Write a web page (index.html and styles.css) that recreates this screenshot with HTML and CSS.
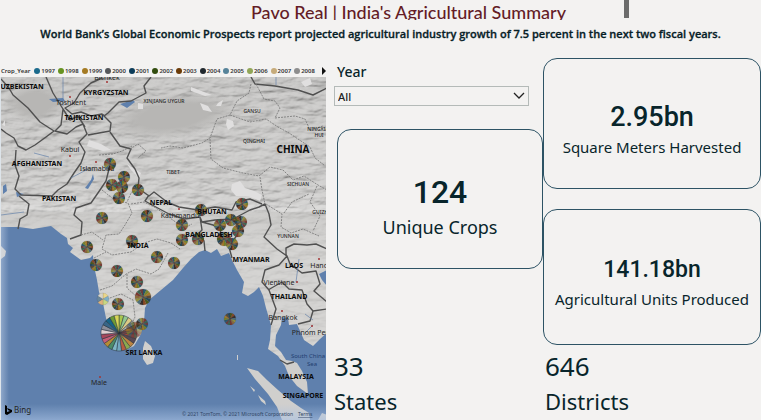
FILE: index.html
```html
<!DOCTYPE html>
<html lang="en">
<head>
<meta charset="utf-8">
<title>Pavo Real | India's Agricultural Summary</title>
<link rel="stylesheet" href="styles.css">
</head>
<body>
<header class="top">
  <h1 class="title">Pavo Real | India's Agricultural Summary</h1>
  <span class="marker"></span>
  <p class="lead">World Bank’s Global Economic Prospects report projected agricultural industry growth of 7.5 percent in the next two fiscal years.</p>
</header>
<main class="board">
  <section class="map-panel">
    <div class="legend">
      <span>Crop_Year</span>
      <ul class="years">
        <li class="c1">1997</li><li class="c2">1998</li><li class="c3">1999</li><li class="c4">2000</li><li class="c5">2001</li><li class="c6">2002</li><li class="c7">2003</li><li class="c8">2004</li><li class="c9">2005</li><li class="c10">2006</li><li class="c11">2007</li><li class="c12">2008</li>
      </ul>
      <button class="next" aria-label="More years"></button>
    </div>
    <svg class="map" viewBox="0 77 326 343" preserveAspectRatio="xMinYMin slice" role="img" aria-label="Map of crops by year">
      <defs>
        <filter id="relief" x="0" y="0" width="100%" height="100%">
          <feTurbulence type="fractalNoise" baseFrequency="0.045 0.13" numOctaves="4" seed="7" result="n"/>
          <feDiffuseLighting in="n" surfaceScale="4" diffuseConstant="1" lighting-color="#ffffff"><feDistantLight azimuth="235" elevation="52"/></feDiffuseLighting>
          <feColorMatrix type="saturate" values="0"/>
        </filter>
        <linearGradient id="edge-left"><stop offset="0" stop-color="#d5e2f4" stop-opacity=".4"/><stop offset="1" stop-color="#d5e2f4" stop-opacity="0"/></linearGradient>
        <linearGradient id="edge-bottom" x2="0" y2="1"><stop offset="0" stop-color="#a9c2e4" stop-opacity="0"/><stop offset="1" stop-color="#a9c2e4" stop-opacity=".6"/></linearGradient>
        <radialGradient id="plain"><stop offset=".5" stop-color="#b7b6b4"/><stop offset="1" stop-color="#b7b6b4" stop-opacity="0"/></radialGradient>
        <linearGradient id="shade" x2="0" y2="1"><stop offset="0" stop-color="#b6b5b3"/><stop offset=".3" stop-color="#bebdbb"/><stop offset=".5" stop-color="#cfcecc"/><stop offset="1" stop-color="#cfcecc"/></linearGradient>
      </defs>
      <rect y="77" width="326" height="343" fill="url(#shade)"/>
      <rect y="77" width="326" height="135" filter="url(#relief)" opacity=".34"/>
      <rect y="205" width="326" height="150" filter="url(#relief)" opacity=".15"/>
      <ellipse cx="172" cy="116" rx="68" ry="23" fill="url(#plain)" transform="rotate(-8 172 116)"/>
      <ellipse cx="34" cy="103" rx="32" ry="20" fill="url(#plain)"/>
      <g class="snow">
        <path d="M190 87l13 5 8 3-7 1-14-5zM199 103l8 3 4 6-9-2zM217 103l5-3-2 6-5 0zM226 119l6 2 1 5-6 4-2-6zM300 82l9-4 2 6-7 3zM231 184l8-3 5 7 9 3 8 4-2 6-12-5-12 0-5-6zM137 103l5 1 0 5-5 0zM88 140l12 4 10 6-8 1-16-5zM126 164l14 9-2 5-8-8zM1 125l3-5 0 6z"/>
      </g>
      <path class="water" d="M0 227L18 227 32 229 50 226 60 234 66 238 67 244 72 248 69 252 80 260 89 258 92 255 93 266 96 280 98 292 102 303 105 318 110 332 118 345 125 350 133 346 140 334 143 322 144 308 148 300 160 290 172 280 182 268 190 259 198 252 204 250 210 253 216 249 220 256 228 253 232 262 236 270 243 282 241 293 247 296 253 292 258 287 262 296 265 308 270 325 269 340 267 349 277 356 284 366 288 376 296 386 307 394 306 382 301 371 296 363 291 361 285 360 280 352 274 346 275 335 280 325 281 317 287 318 288 325 296 324 303 340 312 346 319 339 326 333V420H0ZM326 270L318 274 321 280 326 286ZM119 104l13 -4 2 2-8 6zM48 99l14-1 2 3-12 1zM2 186l3-2 1 7-4 3zM15 192l8 2-7 3zM84 188l6-8 2-6 1 5-6 10z"/>
      <path class="land" d="M246 368L257 371 266 380 277 390 290 401 300 408 308 413 309 420H281L276 407 267 394 254 379ZM144 341L150 346 154 356 152 363 146 365 142 359 142 348ZM0 246L5 251 4 256 0 259ZM257 395l7 6 1 4-5-4zM249 386l5 4-1 2zM326 415l-5-2-4 7h9zM236 355h1v5h-1z"/>
      <g class="border">
        <path d="M0 79L8 88 12 95 27 108 39 122 53 131 45 137 34 145 25 150 17 146 13 138 5 133 0 129M45 77L52 93 62 109 60 125 54 131 66 134 75 127 82 124 86 134 78 142 84 152 80 163 73 173 66 184 57 190 51 196 20 195 14 189 18 176 14 165 15 150M18 196L28 204 26 215 19 219 17 229M150 77L143 86 145 93 130 101 118 102 107 113 103 116 110 123 109 131 98 133 87 135M79 93L90 83 101 78M79 93L73 103 64 108 71 114 80 112 90 116 101 114 104 116M62 109L69 120 77 116 84 127"/>
        <path d="M109 132L119 146 130 149 126 158 134 169 138 178 137 188 148 196 153 192 166 202 178 207 197 210 214 207 231 210 235 202 249 199 261 204M108 169L105 181 99 190 90 203 75 208 73 215 81 222 80 235 69 239M148 195L144 201 153 206 168 214 183 219 199 217 201 222 214 220 232 219 249 210 258 207 264 204 268 214 270 225 263 237 276 249 286 256 278 265 264 270 261 282 268 290 275 309 270 325M199 217L201 230 197 234 203 241 204 251M201 222L212 225 220 229 218 239 228 247 231 258M232 219L240 229 234 238 228 247M250 77L254 84 274 86 297 90 312 95 326 88M285 256L285 248 293 244 306 245 315 244 326 249M286 256L289 264 301 273 315 271 319 284 313 291 326 302M267 290L281 282 288 289 301 290 306 304 312 311 309 321 297 324M312 311L326 309M279 360l7 4 7-2"/>
      </g>
      <g class="dotted">
        <path d="M129 149L137 144 145 151 137 158M98 155L112 154 121 151 131 146M250 84L248 93 236 101 229 115 216 119 209 138 201 143 182 148 169 146 160 148M229 115L249 122 265 119 277 127 288 133 297 139 309 147 314 158 323 165M209 139L210 159 222 168 242 173 258 176 269 167 282 170 292 180 303 176 317 185 326 190M255 84L263 99 274 101 279 108 274 118 294 116 304 119 309 130 322 126M265 204L281 214 280 227 290 233 302 229 318 236M101 190L115 201 127 203 131 213 124 225 118 234 105 235 101 249 111 255 130 252 143 243 156 239 170 243 179 249M130 204L143 202 155 208 169 218 183 228 191 224M80 235L91 232 102 240M93 258L105 252M99 290L111 286 125 274 135 269 150 274 158 269 167 253M106 299L120 294 132 300 134 317 128 330M126 274L126 288 136 297M137 188L130 193 126 202M283 213L291 202 308 194M259 177L261 190 264 204M316 186L309 202 319 216 312 231"/>
      </g>
      <g class="fine"><path d="M62 77v29M275 77v8M0 215l23-3M48 157l-15-4M70 178l17-9M298 259l-3 23M304 314l8 6M304 333l8-8"/></g>
      <g class="city"><circle cx="106" cy="82" r="1"/><circle cx="69" cy="97" r="1"/><circle cx="69" cy="156" r="1"/><circle cx="95" cy="162" r="1"/><circle cx="178" cy="209" r="1"/><circle cx="318" cy="259" r="1"/><circle cx="296" cy="282" r="1"/><circle cx="281" cy="311" r="1"/><circle cx="311" cy="326" r="1"/><circle cx="99" cy="377" r="1"/></g>
      <g class="towns">
        <text x="106" y="80">Bishkek</text><text x="70" y="105">Toshkent</text><text x="69" y="152">Kabul</text><text x="96" y="171">Islamabad</text><text x="179" y="218">Kathmandu</text><text x="319" y="268">Hanoi</text><text x="278" y="285">Vientiane</text><text x="282" y="320">Bangkok</text><text x="312" y="335">Phnom Penh</text><text x="98" y="385">Male</text>
      </g>
      <g class="provinces"><text x="163" y="103">XINJIANG UYGUR</text><text x="251" y="113">GANSU</text><text x="253" y="143">QINGHAI</text><text x="317" y="131">NINGXIA</text><text x="318" y="137">HUI</text><text x="172" y="174">TIBET</text><text x="297" y="186">SICHUAN</text><text x="323" y="214">GUIZHOU</text><text x="287" y="238">YUNNAN</text></g>
      <g class="sea-name"><text x="307" y="358">South China</text><text x="311" y="366">Sea</text></g>
      <g id="pies"></g>
      <g class="countries">
        <text x="21" y="89">UZBEKISTAN</text><text x="105" y="95">KYRGYZSTAN</text><text x="83" y="120">TAJIKISTAN</text><text x="36" y="166">AFGHANISTAN</text><text x="58" y="201">PAKISTAN</text><text x="160" y="205">NEPAL</text><text x="211" y="214">BHUTAN</text><text x="208" y="237">BANGLADESH</text><text x="137" y="248">INDIA</text><text x="250" y="262">MYANMAR</text><text x="293" y="268">LAOS</text><text x="288" y="299">THAILAND</text><text x="143" y="355">SRI LANKA</text><text x="295" y="379">MALAYSIA</text><text x="302" y="398">SINGAPORE</text>
        <text class="big" x="292" y="153">CHINA</text>
      </g>
      <rect y="227" width="8" height="193" fill="url(#edge-left)"/>
      <rect y="404" width="326" height="16" fill="url(#edge-bottom)"/>
      <path d="M4 405l2 1v6l3-1-2-1-1-2 5 2v2l-5 3-2-1z"/>
      <text class="bing" x="13" y="413">Bing</text>
      <text class="credit" x="181" y="416">© 2021 TomTom, © 2021 Microsoft Corporation</text>
      <text class="credit terms" x="297" y="416">Terms</text>
    </svg>
  </section>
  <section class="middle">
    <div class="filter">
      <label for="year">Year</label>
      <div class="picker">
        <select id="year"><option>All</option></select>
        <svg class="chevron" viewBox="0 0 12 7"><path d="M1 1l5 5 5-5"/></svg>
      </div>
    </div>
    <article class="card crops"><strong>124</strong><span>Unique Crops</span></article>
    <div class="stat"><strong>33</strong><span>States</span></div>
  </section>
  <section class="right">
    <article class="card harvested"><strong>2.95bn</strong><span>Square Meters Harvested</span></article>
    <article class="card produced"><strong>141.18bn</strong><span>Agricultural Units Produced</span></article>
    <div class="stat"><strong>646</strong><span>Districts</span></div>
  </section>
</main>
<script src="script.js"></script>
</body>
</html>
```
FILE: styles.css
```css
* { box-sizing: border-box; }
body {
  margin: 0;
  min-height: 100vh;
  display: flex;
  flex-direction: column;
  background: #f3f2f1;
  color: #08252b;
  font-family: "Noto Sans", "Open Sans", sans-serif;
}
.top { position: relative; height: 58px; text-align: center; }
.title {
  margin: 0;
  height: 20px;
  padding-left: 56px;
  overflow: hidden;
  color: #641c26;
  font: 500 18px/24px Lato, sans-serif;
}
.marker { position: absolute; left: 82%; top: 0; width: 5px; height: 18px; background: #6c6c6c; }
.lead { margin: 4px 0 0; font-size: 11px; line-height: 20px; font-weight: 600; white-space: nowrap; font-family: "Open Sans", sans-serif; -webkit-text-stroke: 0.3px; color: #062026; }
.board { flex: 1; display: grid; grid-template-columns: 326fr 217fr 218fr; }
.map-panel { display: flex; flex-direction: column; padding-top: 6px; min-width: 0; }
.legend { display: flex; align-items: center; height: 13px; padding-left: 1px; font-size: 6px; font-weight: 600; color: #333; }
.years { display: flex; flex: 1; justify-content: space-between; margin: 0; padding: 0 7px 0 4px; list-style: none; }
.years li { display: flex; align-items: center; gap: 1px; }
.years li::before { content: ""; width: 6px; height: 6px; border-radius: 50%; background: #1b6a8c; }
.years .c2::before { background: #679321; }
.years .c3::before { background: #a47a22; }
.years .c4::before { background: #55575a; }
.years .c5::before { background: #0c3c59; }
.years .c6::before { background: #314c0e; }
.years .c7::before { background: #6b3b08; }
.years .c8::before { background: #20282e; }
.years .c9::before { background: #568399; }
.years .c10::before { background: #91a657; }
.years .c11::before { background: #c6ab7a; }
.years .c12::before { background: #8d8d8d; }
.next { width: 4px; height: 8px; padding: 0; border: solid transparent; border-width: 4px 0 4px 4px; border-left-color: #111; background: none; }
.map { display: block; width: 100%; flex: 1; min-height: 0; border-left: 1px solid #dde4ea; }
.map text { fill: #252525; font-family: "Noto Sans", sans-serif; }
.water { fill: #5f80ad; }
.land { fill: #d0cfcd; }
.snow { fill: #e0dfdf; }
.border { fill: none; stroke: #505050; stroke-width: 1.4; stroke-linejoin: round; }
.dotted { fill: none; stroke: #747474; stroke-width: .8; stroke-dasharray: 2 1; }
.fine { fill: none; stroke: #6683aa; stroke-width: .7; }
.city { fill: #a33434; }
.towns { font-size: 7px; text-anchor: middle; }
.provinces { font-size: 5px; font-weight: 500; text-anchor: middle; }
.map .sea-name text { font-size: 6px; text-anchor: middle; fill: #233f70; }
.countries { font-size: 7px; font-weight: 700; text-anchor: middle; }
.map .countries text { fill: #0a0a0a; }
.countries .big { font-size: 10px; }
.map .bing { font-size: 8px; }
.map .credit { font-size: 5px; fill: #304564; }
.terms { text-decoration: underline; }
.middle, .right { display: flex; flex-direction: column; min-width: 0; }
.middle { padding-left: 8px; }
.filter { padding: 4px 14px 0 0; }
.filter label { display: block; padding-left: 3px; font-size: 14px; line-height: 20px; font-weight: 500; }
.picker { position: relative; margin-top: 4px; }
.picker select { display: block; width: 100%; height: 20px; padding: 0 3px; border: 1px solid #b4bab8; border-radius: 0; appearance: none; background: none; color: #222; font: 500 11px "Noto Sans", sans-serif; }
.chevron { position: absolute; right: 4px; top: 6px; width: 12px; height: 7px; fill: none; stroke: #222; stroke-width: 1.3; pointer-events: none; }
.card { display: flex; flex-direction: column; align-items: center; border: 1px solid #2d5365; border-radius: 14px; white-space: nowrap; }
.card strong { font-family: Roboto, sans-serif; font-weight: 500; }
.crops { margin: 23px 0 0 3px; height: 140px; padding-top: 42px; }
.crops strong { font-size: 32px; line-height: 40px; }
.crops span { font-size: 18px; line-height: 30px; }
.harvested { height: 131px; padding-top: 42px; }
.produced { height: 136px; margin-top: 20px; padding-top: 45px; }
.harvested strong { font-size: 27px; line-height: 32px; }
.produced strong { font-size: 23px; line-height: 30px; }
.harvested span, .produced span { font-size: 15px; line-height: 28px; }
.stat { display: flex; flex-direction: column; margin-top: auto; padding: 0 0 2px 2px; }
.middle .stat { padding-left: 0; }
.stat strong { font-size: 26px; font-weight: 400; line-height: 36px; }
.stat span { font-size: 22px; line-height: 34px; }
```
FILE: script.js
```js
const NS = 'http://www.w3.org/2000/svg';
const dark = ['#2d5a6b', '#78862a', '#a67a28', '#5d4b35', '#264856', '#4c5a1c', '#8a4a22', '#3b2f2a', '#4f7078', '#93913f', '#8f6a3a', '#7d3a30', '#3f6650', '#6b3e3c'];
const bright = ['#a9c64f', '#93c990', '#dccb86', '#b3b4b2', '#8f573c', '#80414b', '#a0463f', '#594853', '#bd843f', '#8ba94f', '#b55e42', '#72a8c0', '#7fb6c4', '#4d8c68', '#b68b34', '#c45e78', '#a7475d', '#dfcfd1', '#8c8e99', '#376587', '#15658a', '#6d9b36', '#d8d557'];
const light = ['#ead68a', '#7eafc5', '#c8d682', '#ddb27c', '#68869b', '#d9d5c6'];
const points = [
  [109,164,6],[123,177,6],[111,185,6],[121,187,6],[137,190,6],[118,198,6],[101,218,6],[146,216,6],[131,241,6],
  [86,247,6],[95,265,6],[116,271,6],[156,257,6],[136,282,6],[142,297,8],[102,299,6,light],[117,304,6],[173,263,6],
  [181,225,6],[181,240,6],[197,239,6],[200,210,6],[241,204,6],[230,220,6],[240,222,6],[219,225,6],[237,231,6],
  [223,239,7],[231,244,6],[229,319,6],[141,324,6],[118,333,18,bright],[133,330,8]
];
const host = document.getElementById('pies');
points.forEach(([x, y, r, palette = dark], n) => {
  const g = document.createElementNS(NS, 'g');
  const count = palette.length;
  for (let i = 0; i < count; i++) {
    const a = i / count * Math.PI * 2 - Math.PI / 2;
    const b = (i + 1) / count * Math.PI * 2 - Math.PI / 2;
    const p = document.createElementNS(NS, 'path');
    p.setAttribute('d', `M${x} ${y}L${x + r * Math.cos(a)} ${y + r * Math.sin(a)}A${r} ${r} 0 0 1 ${x + r * Math.cos(b)} ${y + r * Math.sin(b)}Z`);
    p.setAttribute('fill', palette[(i + (palette === dark ? n * 5 : 0)) % count]);
    p.setAttribute('stroke', '#29303a');
    p.setAttribute('stroke-width', r > 10 ? '.5' : '.12');
    g.appendChild(p);
  }
  if (n === points.length - 1) g.setAttribute('opacity', '.65');
  host.appendChild(g);
});
```
